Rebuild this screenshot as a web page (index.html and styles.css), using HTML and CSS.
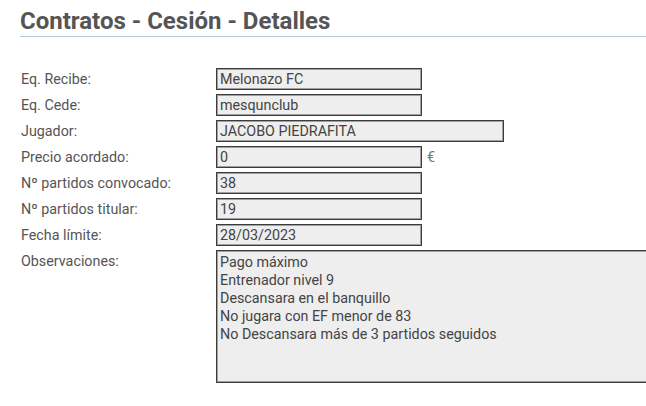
FILE: index.html
```html
<!DOCTYPE html>
<html lang="es">
<head>
<meta charset="utf-8">
<title>Contratos - Cesión - Detalles</title>
<link rel="stylesheet" href="styles.css">
</head>
<body>
<div class="page">
  <h1 class="title">Contratos - Cesión - Detalles</h1>
  <div class="form">
    <div class="row"><label class="lbl">Eq. Recibe:</label><div class="field"><input class="inp" type="text" value="Melonazo FC" readonly></div></div>
    <div class="row"><label class="lbl">Eq. Cede:</label><div class="field"><input class="inp" type="text" value="mesqunclub" readonly></div></div>
    <div class="row"><label class="lbl">Jugador:</label><div class="field"><input class="inp inp-wide" type="text" value="JACOBO PIEDRAFITA" readonly></div></div>
    <div class="row"><label class="lbl">Precio acordado:</label><div class="field"><input class="inp" type="text" value="0" readonly><span class="unit">€</span></div></div>
    <div class="row"><label class="lbl">Nº partidos convocado:</label><div class="field"><input class="inp" type="text" value="38" readonly></div></div>
    <div class="row"><label class="lbl">Nº partidos titular:</label><div class="field"><input class="inp" type="text" value="19" readonly></div></div>
    <div class="row"><label class="lbl">Fecha límite:</label><div class="field"><input class="inp" type="text" value="28/03/2023" readonly></div></div>
    <div class="row"><label class="lbl">Observaciones:</label><div class="field"><textarea class="area" readonly>Pago máximo
Entrenador nivel 9
Descansara en el banquillo
No jugara con EF menor de 83
No Descansara más de 3 partidos seguidos</textarea></div></div>
  </div>
</div>
</body>
</html>
```

FILE: styles.css
```css
html, body {
  margin: 0;
  padding: 0;
  background: #ffffff;
  overflow: hidden;
}
body {
  font-family: Roboto, "Liberation Sans", sans-serif;
  color: #555555;
}
.page {
  padding: 8px 0 0 20px;
}
.title {
  margin: 0;
  font-size: 24px;
  font-weight: 700;
  color: #555555;
  line-height: 27px;
  padding-bottom: 1px;
  border-bottom: 1px solid #b7cad8;
}
.form {
  padding-top: 31px;
  display: flex;
  flex-direction: column;
  gap: 4px;
}
.row {
  display: flex;
  align-items: flex-start;
}
.lbl {
  width: 195px;
  flex: none;
  font-size: 14.3px;
  line-height: 22px;
  padding-left: 1px;
  color: #555555;
}
.field {
  display: flex;
  align-items: center;
  flex: 1;
}
.inp {
  box-sizing: border-box;
  width: 206px;
  height: 22px;
  margin: 0;
  padding: 0 3px;
  font-family: Roboto, "Liberation Sans", sans-serif;
  font-size: 14.3px;
  color: #444444;
  background: #eeeeee;
  border: 1px solid #3c3c3c;
  box-shadow: inset 0 0 0 1px #a0a0a0;
  outline: none;
}
.inp-wide {
  width: 288px;
}
.unit {
  margin-left: 5px;
  font-size: 14.3px;
  color: #777777;
}
.area {
  box-sizing: border-box;
  width: 440px;
  height: 133px;
  margin: 0;
  padding: 2px 3px;
  font-family: Roboto, "Liberation Sans", sans-serif;
  font-size: 14.3px;
  line-height: 18px;
  color: #444444;
  background: #eeeeee;
  border: 1px solid #3c3c3c;
  box-shadow: inset 0 0 0 1px #a0a0a0;
  resize: none;
  outline: none;
}
```
